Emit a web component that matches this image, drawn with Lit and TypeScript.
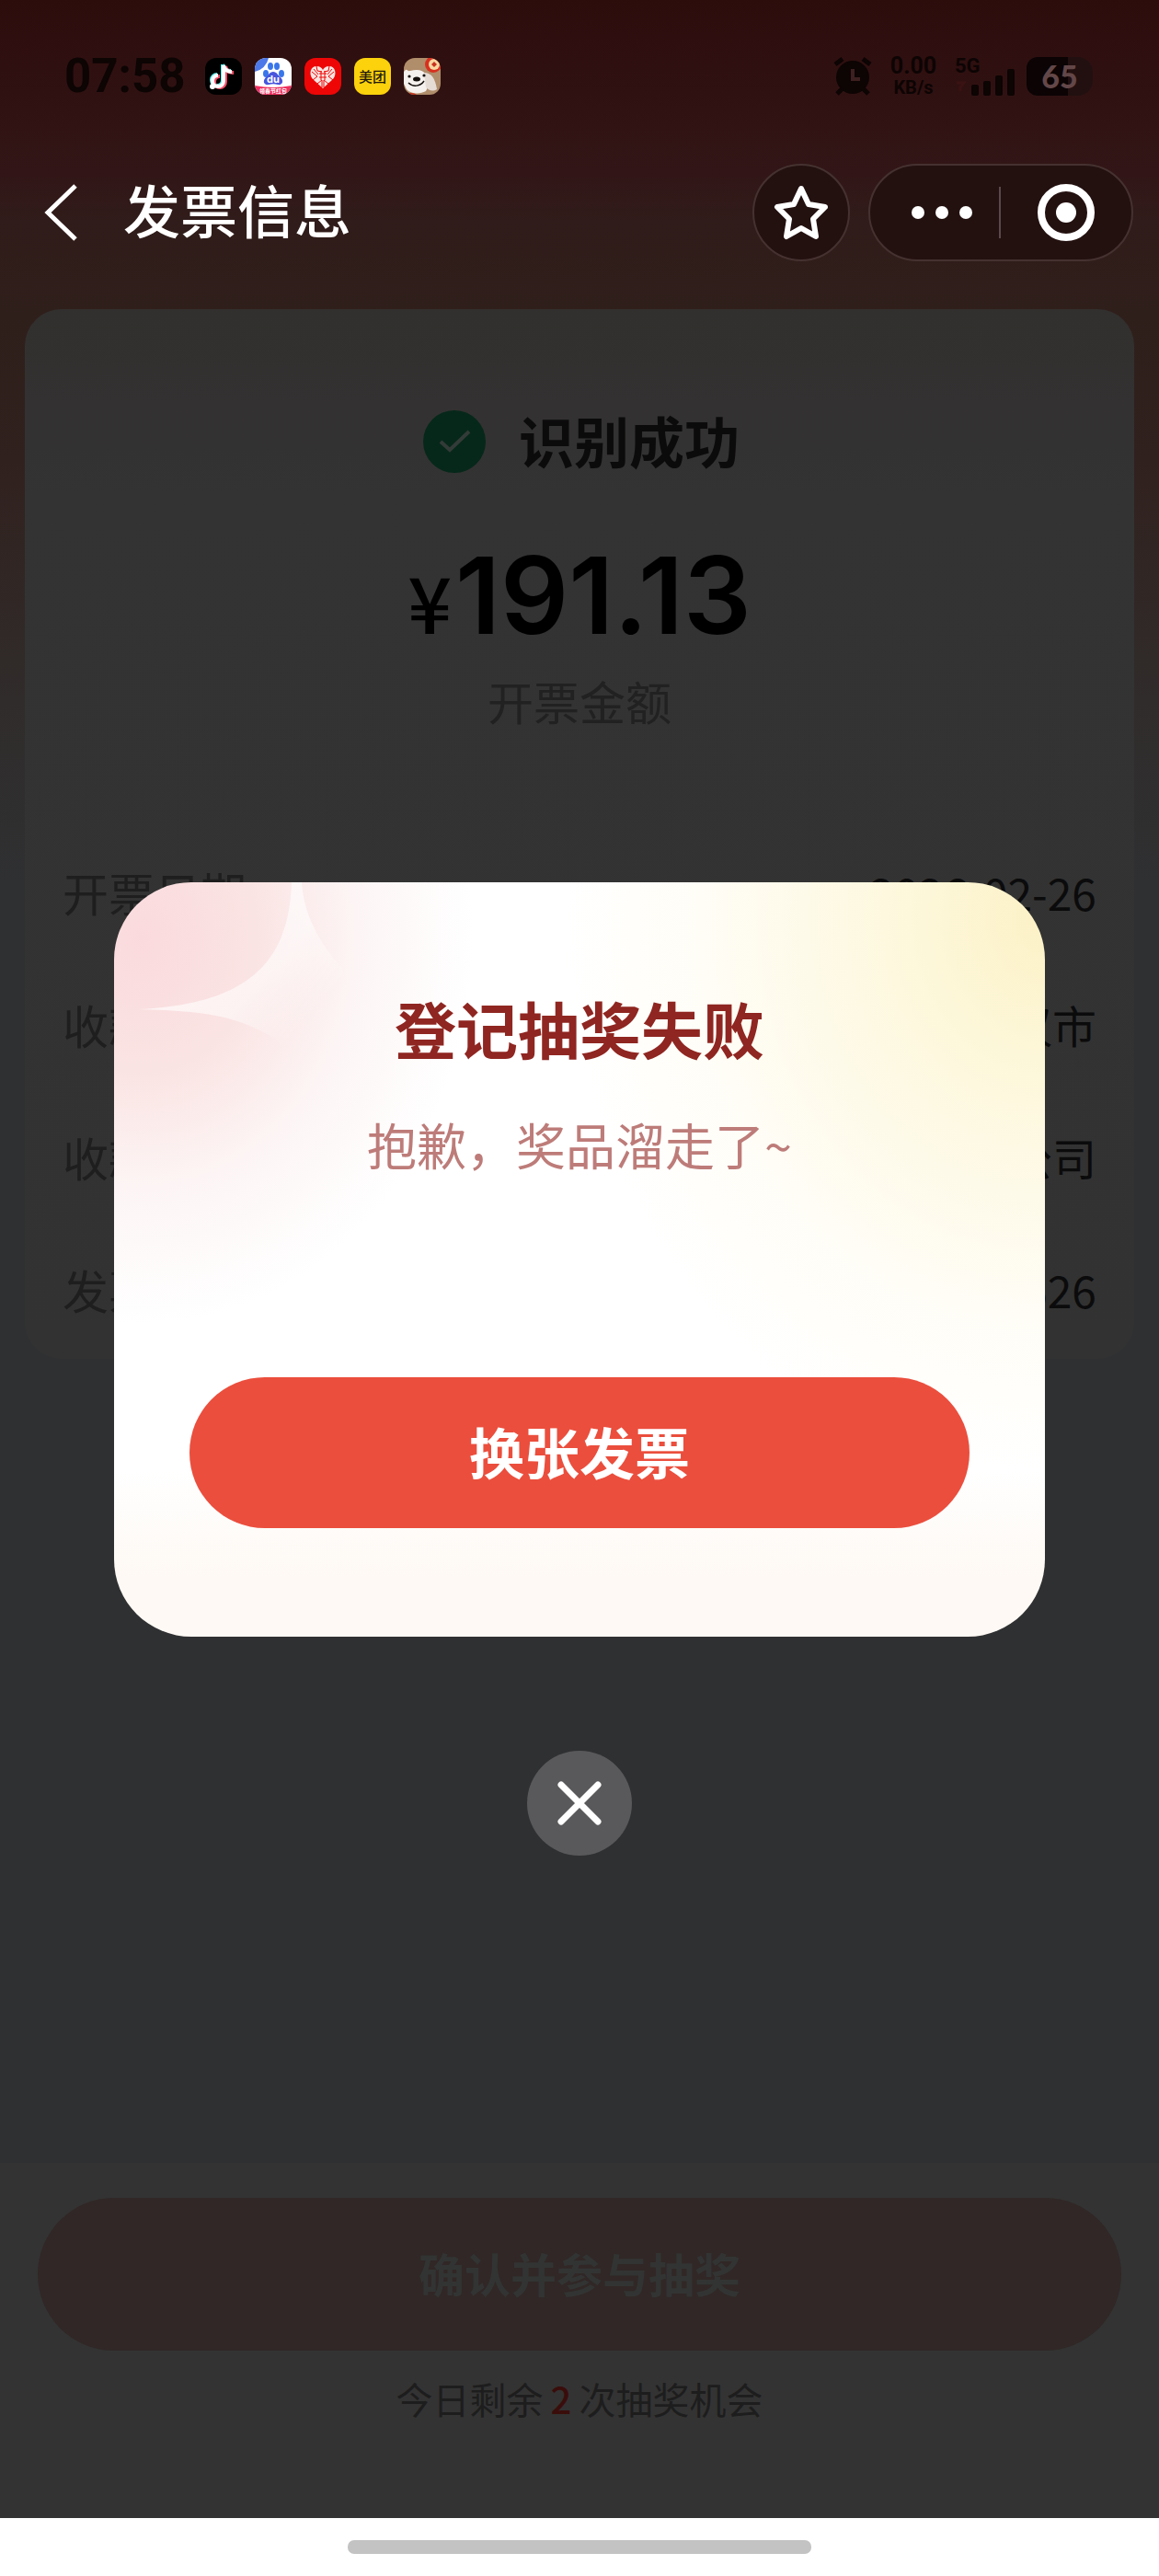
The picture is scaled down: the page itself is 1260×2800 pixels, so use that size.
import { LitElement, html, css, svg } from "lit";
import { customElement } from "lit/decorators.js";

interface Field {
  label: string;
  value: string;
}

const fields: Field[] = [
  { label: "开票日期", value: "2026-02-26" },
  { label: "收款方地区", value: "武汉市" },
  { label: "收款方名称", value: "有限公司" },
  { label: "发票号码", value: "42000626" },
];

const petals = [
  [12, 17, 3, 4],
  [17, 9, 3, 4],
  [24, 9, 3, 4],
  [29, 17, 3, 4],
];

@customElement("status-bar")
export class StatusBar extends LitElement {
  static styles = css`
    :host {
      display: flex;
      align-items: center;
      justify-content: space-between;
      height: 42px;
      padding: 62px 72px 0 70px;
      font-family: Roboto, "Noto Sans CJK SC", sans-serif;
      font-weight: 700;
      color: #0d0404;
    }
    .group {
      display: flex;
      align-items: center;
    }
    .time {
      font-size: 51px;
      line-height: 42px;
      margin-right: 22px;
    }
    .apps {
      display: flex;
      gap: 14px;
    }
    .app {
      display: block;
      width: 40px;
      height: 40px;
      border-radius: 12px;
      overflow: hidden;
    }
    .rate {
      display: flex;
      flex-direction: column;
      align-items: center;
      width: 58px;
      margin: 0 16px;
      font-size: 25px;
      line-height: 24px;
    }
    .rate .unit {
      font-size: 20px;
      line-height: 22px;
    }
    .icon {
      display: block;
      flex: none;
    }
    .network {
      display: flex;
      align-items: flex-end;
    }
    .kind {
      display: flex;
      flex-direction: column;
      width: 16px;
      height: 42px;
      font-size: 22px;
      line-height: 20px;
      white-space: nowrap;
    }
    .battery {
      display: flex;
      align-items: center;
      justify-content: center;
      width: 72px;
      height: 42px;
      margin-left: 12px;
      border-radius: 12px 16px 16px 12px;
      background: linear-gradient(to right, #0b0304 62%, #221010 62%);
      color: #634748;
      font-family: Lato, sans-serif;
      font-weight: 900;
      font-size: 34px;
      line-height: 42px;
    }
  `;

  render() {
    return html`
      <div class="group">
        <span class="time">07:58</span>
        <div class="apps">
          <svg class="app" viewBox="0 0 40 40">
            <rect width="40" height="40" fill="#000" />
            <g fill="none" stroke-width="4">
              <path d="M20 8v17a6 6 0 1 1-6-6M20 8c1 4 4 7 9 7" stroke="#5fe8e6" transform="translate(-1 -1)" />
              <path d="M20 8v17a6 6 0 1 1-6-6M20 8c1 4 4 7 9 7" stroke="#f0506a" transform="translate(2 1)" />
              <path d="M20 8v17a6 6 0 1 1-6-6M20 8c1 4 4 7 9 7" stroke="#fff" />
            </g>
            <circle cx="8" cy="31" r="3" fill="#fff" />
          </svg>
          <svg class="app" viewBox="0 0 40 40">
            <rect width="40" height="40" fill="#fff" />
            <path d="M0 0h15Q12 12 0 15Z" fill="#4c78e8" />
            <g fill="#3a76ea">
              ${petals.map(([x, y, rx, ry]) => svg`<ellipse cx=${x} cy=${y} rx=${rx} ry=${ry} />`)}
            </g>
            <path d="M20 15c4 0 5 4 8 6 4 4 2 9-3 8-3-1-7-1-10 0-5 1-7-4-3-8 3-2 4-6 8-6Z" fill="#4855dc" />
            <text x="20" y="27" text-anchor="middle" font-size="11" font-family="Inter, sans-serif" font-weight="700" fill="#fff">du</text>
            <path d="M0 30q20 4 40 0v10H0Z" fill="#ee2e5e" />
            <text x="20" y="38" text-anchor="middle" font-size="6" font-family="Noto Sans CJK SC, sans-serif" font-weight="700" fill="#fff">领春节红包</text>
          </svg>
          <svg class="app" viewBox="0 0 40 40">
            <rect width="40" height="40" fill="#ee0606" />
            <path d="M20 33 9 23c-5-6-2-14 4-14 4 0 6 2 7 4 1-2 3-4 7-4 6 0 9 8 4 14Z" fill="#f8e4e0" />
            <g fill="none" stroke="#ee0606" stroke-width="1">
              <path d="m8 15 6 5-5 4M32 15l-6 5 5 4M13 9l1 5 5 1M27 9l-1 5-5 1M14 28l5-4v8M26 28l-5-4v8M10 12l5 6M30 12l-5 6M16 17h8M16 21h8M18 14v10M22 14v10" />
            </g>
          </svg>
          <svg class="app" viewBox="0 0 40 40">
            <rect width="40" height="40" fill="#fbd20c" />
            <text x="20" y="26" text-anchor="middle" font-size="15" font-family="Noto Sans CJK SC, sans-serif" font-weight="500" fill="#231a08">美团</text>
          </svg>
          <svg class="app" viewBox="0 0 40 40">
            <rect width="40" height="40" fill="#b08d6b" />
            <path d="M0 15c4-5 3 0 7-1 8-2 14-1 17 4 3 5 3 13 0 18-7 4-17 3-21-2L0 28Z" fill="#f5f1ef" />
            <path d="M22 16c8 0 12 6 14 18-5 3-9 1-12-2Z" fill="#e6dcd6" />
            <circle cx="32" cy="7" r="9" fill="#d8301f" />
            <circle cx="33" cy="7" r="6" fill="#fbd7a0" />
            <path d="m33 4 3 3-3 3-3-3Z" fill="#c8321e" />
            <ellipse cx="14" cy="23" rx="4" ry="2.5" fill="#15100e" />
            <circle cx="6" cy="20" r="1.6" fill="#15100e" />
            <circle cx="22" cy="19" r="1.6" fill="#15100e" />
            <path d="M5 27c5 5 13 4 17-2" fill="none" stroke="#15100e" stroke-width="1.5" />
            <path d="M3 40c3-3 8-2 11 0Z" fill="#c8321e" />
          </svg>
        </div>
      </div>
      <div class="group">
        <svg class="icon" width="42" height="42" viewBox="0 0 42 42">
          <circle cx="21" cy="22" r="18" fill="#0d0404" />
          <path d="M2 8 10 2M40 8l-8-6M4 40l6-6M38 40l-6-6" stroke="#0d0404" stroke-width="5" fill="none" />
          <path d="M21 13v11h8" stroke="#3d2020" stroke-width="4" fill="none" />
        </svg>
        <span class="rate"><span>0.00</span><span class="unit">KB/s</span></span>
        <span class="network">
          <span class="kind">
            5G
            <svg class="icon" width="14" height="20" viewBox="0 0 14 20">
              <path d="M2 8h8l-4 5v4" fill="none" stroke="#3a1214" stroke-width="3" />
            </svg>
          </span>
          <svg class="icon" width="50" height="42" viewBox="0 0 50 42" fill="#0d0404">
            <rect x="2" y="30" width="8" height="12" rx="2" />
            <rect x="15" y="26" width="8" height="16" rx="2" />
            <rect x="28" y="20" width="8" height="22" rx="2" />
            <rect x="41" y="13" width="8" height="29" rx="2" />
          </svg>
        </span>
        <span class="battery">65</span>
      </div>
    `;
  }
}

@customElement("page-header")
export class PageHeader extends LitElement {
  static styles = css`
    :host {
      display: flex;
      align-items: center;
      height: 106px;
      padding: 0 28px 0 32px;
      margin-top: 74px;
      color: #fff;
      font-family: "Noto Sans CJK SC", sans-serif;
    }
    button {
      display: flex;
      align-items: center;
      justify-content: center;
      box-sizing: border-box;
      height: 100%;
      margin: 0;
      padding: 0;
      border: 0;
      background: none;
      color: inherit;
    }
    .back {
      width: 68px;
    }
    .title {
      flex: 1;
      margin: 0 0 0 34px;
      padding-bottom: 8px;
      font-size: 62px;
      font-weight: 500;
      line-height: 80px;
    }
    .round {
      width: 106px;
      border: 2px solid #453230;
      border-radius: 53px;
      background: #231110;
    }
    .capsule {
      display: flex;
      align-items: center;
      box-sizing: border-box;
      width: 288px;
      height: 100%;
      margin-left: 20px;
      border: 2px solid #453230;
      border-radius: 53px;
      background: #231110;
    }
    .more {
      flex: 1;
      padding-left: 16px;
    }
    .exit {
      width: 142px;
    }
    .divider {
      width: 2px;
      height: 56px;
      background: #59494a;
    }
  `;

  render() {
    return html`
      <button class="back" aria-label="返回">
        <svg width="40" height="64" viewBox="0 0 40 64" fill="none" stroke="#fff" stroke-width="5">
          <path d="M36 3 6 32l30 29" />
        </svg>
      </button>
      <h1 class="title">发票信息</h1>
      <button class="round" aria-label="收藏">
        <svg width="60" height="62" viewBox="0 0 60 62" fill="none" stroke="#fff" stroke-width="6" stroke-linejoin="round">
          <path d="M30 5 38 22 56 25 43 38 46 57 30 48 14 57 17 38 4 25 22 22Z" />
        </svg>
      </button>
      <div class="capsule">
        <button class="more" aria-label="更多">
          <svg width="68" height="16" viewBox="0 0 68 16" fill="#fff">
            <circle cx="8" cy="8" r="7" />
            <circle cx="34" cy="8" r="7" />
            <circle cx="60" cy="8" r="7" />
          </svg>
        </button>
        <span class="divider"></span>
        <button class="exit" aria-label="关闭">
          <svg width="64" height="64" viewBox="0 0 64 64">
            <circle cx="32" cy="32" r="27" fill="none" stroke="#fff" stroke-width="8" />
            <circle cx="32" cy="32" r="11" fill="#fff" />
          </svg>
        </button>
      </div>
    `;
  }
}

@customElement("invoice-card")
export class InvoiceCard extends LitElement {
  static styles = css`
    :host {
      display: block;
      margin: 52px 27px 0;
      padding: 104px 41px 4px;
      border-radius: 40px;
      background: linear-gradient(#31302e, #333131 100px, #333 200px, #323232);
      font-family: "Noto Sans CJK SC", sans-serif;
    }
    .result {
      display: flex;
      align-items: center;
      justify-content: center;
      gap: 36px;
      height: 80px;
      padding-left: 4px;
    }
    .result-text {
      margin: 0;
      padding-bottom: 4px;
      font-size: 60px;
      line-height: 80px;
      font-weight: 700;
      color: #0c0b0c;
    }
    .amount {
      display: flex;
      align-items: baseline;
      justify-content: center;
      gap: 4px;
      margin: 55px 0 0;
      font-family: Inter, sans-serif;
      font-size: 116px;
      line-height: 144px;
      font-weight: 600;
      color: #000;
    }
    .currency {
      font-family: "Noto Sans CJK SC", sans-serif;
      font-size: 84px;
      line-height: 80px;
      font-weight: 500;
    }
    .caption {
      margin: 2px 0 96px;
      text-align: center;
      font-size: 50px;
      line-height: 80px;
      color: #212121;
    }
    .fields {
      margin: 0;
    }
    .row {
      display: flex;
      align-items: center;
      justify-content: space-between;
      height: 144px;
      font-size: 50px;
      line-height: 80px;
    }
    .label {
      color: #1e1e1e;
    }
    .value {
      margin: 0;
      font-size: 48px;
      color: #0b0b0c;
    }
  `;

  render() {
    return html`
      <div class="result">
        <svg width="68" height="68" viewBox="0 0 68 68" fill="none">
          <circle cx="34" cy="34" r="34" fill="#06281a" />
          <path d="m19 34 10 9 21-20" stroke="#333b38" stroke-width="4" />
        </svg>
        <h2 class="result-text">识别成功</h2>
      </div>
      <p class="amount"><span class="currency">¥</span><span>191.13</span></p>
      <p class="caption">开票金额</p>
      <dl class="fields">
        ${fields.map(
          (f) => html`<div class="row"><dt class="label">${f.label}</dt><dd class="value">${f.value}</dd></div>`
        )}
      </dl>
    `;
  }
}

@customElement("result-dialog")
export class ResultDialog extends LitElement {
  static styles = css`
    :host {
      position: absolute;
      inset: 0;
      display: flex;
      flex-direction: column;
      align-items: center;
      justify-content: center;
      padding: 176px 124px 0;
      font-family: "Noto Sans CJK SC", sans-serif;
      text-align: center;
    }
    .panel {
      position: relative;
      box-sizing: border-box;
      width: 100%;
      padding: 118px 82px 118px;
      border-radius: 84px;
      overflow: hidden;
      background: radial-gradient(ellipse 360px 420px at 30px 60px, #fbdadd, #fae4e3 35%, #fdf5f5 65%, #fff0),
        radial-gradient(ellipse 520px 600px at 100% 40px, #fcf1c6, #fdf7d9 25%, #fefae9 50%, #fffdf6 72%, #fff0),
        linear-gradient(#fff 78%, #fef9f4 92%);
    }
    .shine {
      position: absolute;
      top: 0;
      left: 0;
    }
    .title {
      position: relative;
      margin: 0;
      font-size: 67px;
      line-height: 80px;
      font-weight: 700;
      color: #8f2621;
    }
    .message {
      position: relative;
      margin: 50px 0 216px;
      font-size: 54px;
      line-height: 74px;
      color: #bd7c79;
    }
    .action {
      position: relative;
      display: block;
      width: 100%;
      height: 164px;
      padding: 0 0 4px;
      border: 0;
      border-radius: 82px;
      background: #eb4e3d;
      font: 700 60px/80px "Noto Sans CJK SC", sans-serif;
      color: #fff;
    }
    .close {
      display: flex;
      align-items: center;
      justify-content: center;
      width: 114px;
      height: 114px;
      margin-top: 124px;
      padding: 0;
      border: 0;
      border-radius: 50%;
      background: #59595b;
    }
  `;

  render() {
    return html`
      <section class="panel" role="dialog" aria-labelledby="title">
        <svg class="shine" width="320" height="240" viewBox="0 0 320 240">
          <defs>
            <linearGradient id="glow" gradientUnits="userSpaceOnUse" x1="120" y1="70" x2="210" y2="150">
              <stop offset="0" stop-color="#fff" stop-opacity=".65" />
              <stop offset=".45" stop-color="#fff" stop-opacity=".55" />
              <stop offset="1" stop-color="#fff" stop-opacity="0" />
            </linearGradient>
          </defs>
          <path d="M193 0C190 84 150 132 26 138 100 140 150 144 200 190L290 130C232 90 206 40 204 0Z" fill="url(#glow)" />
        </svg>
        <h2 class="title" id="title">登记抽奖失败</h2>
        <p class="message">抱歉，奖品溜走了~</p>
        <button class="action">换张发票</button>
      </section>
      <button class="close" aria-label="关闭弹窗">
        <svg width="52" height="52" viewBox="0 0 52 52" fill="none" stroke="#fff" stroke-width="7" stroke-linecap="round">
          <path d="m6 6 40 40M46 6 6 46" />
        </svg>
      </button>
    `;
  }
}

@customElement("app-root")
export class AppRoot extends LitElement {
  static styles = css`
    :host {
      display: block;
    }
    .screen {
      position: relative;
      display: flex;
      flex-direction: column;
      min-height: 100vh;
      background: linear-gradient(
        #2d0c0c,
        #311313 140px,
        #321617 190px,
        #301c1a 240px,
        #2f1f1b 340px,
        #31211e 500px,
        #302c2b 760px,
        #2f3032 960px
      );
      font-family: "Noto Sans CJK SC", sans-serif;
    }
    .footer {
      margin-top: auto;
      padding: 38px 41px 98px;
      background: #333;
      text-align: center;
    }
    .confirm {
      display: block;
      width: 100%;
      height: 166px;
      padding: 0 0 4px;
      border: 0;
      border-radius: 83px;
      background: #302726;
      font: 700 50px/80px "Noto Sans CJK SC", sans-serif;
      color: #323433;
    }
    .chances {
      margin: 20px 0 0;
      font-size: 40px;
      line-height: 64px;
      color: #1d1d1d;
    }
    .count {
      margin: 0 8px;
      color: #3a0d0b;
      font-weight: 500;
    }
    .gesture {
      display: flex;
      justify-content: center;
      padding: 24px 0;
      background: #fff;
    }
    .pill {
      width: 40%;
      height: 15px;
      border-radius: 7px;
      background: #c3c3c3;
    }
  `;

  render() {
    return html`
      <main class="screen">
        <status-bar></status-bar>
        <page-header></page-header>
        <invoice-card></invoice-card>
        <footer class="footer">
          <button class="confirm">确认并参与抽奖</button>
          <p class="chances">今日剩余<span class="count">2</span>次抽奖机会</p>
        </footer>
        <div class="gesture"><span class="pill"></span></div>
        <result-dialog></result-dialog>
      </main>
    `;
  }
}
